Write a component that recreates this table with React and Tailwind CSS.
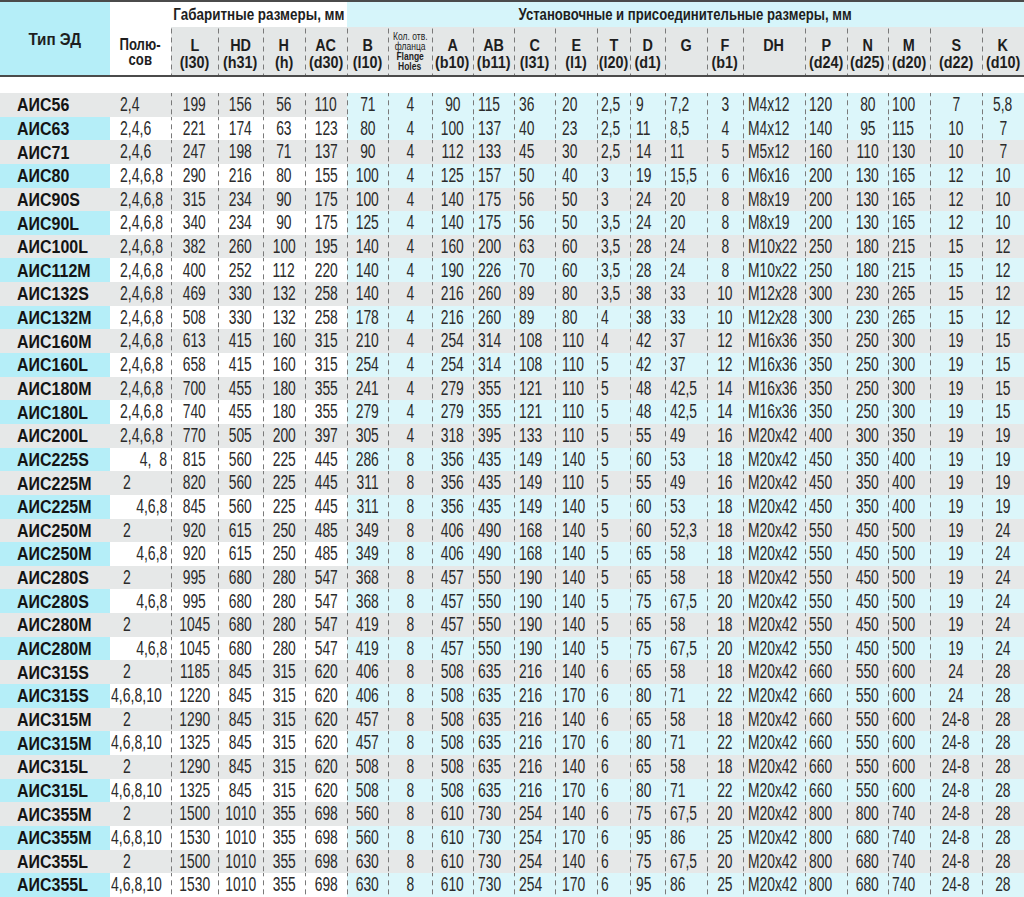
import React from 'react';

// габариты и присоединительные размеры двигателей АИС
const rows = [
  ['АИС56', '2,4', '199', '156', '56', '110', '71', '4', '90', '115', '36', '20', '2,5', '9', '7,2', '3', 'M4x12', '120', '80', '100', '7', '5,8'],
  ['АИС63', '2,4,6', '221', '174', '63', '123', '80', '4', '100', '137', '40', '23', '2,5', '11', '8,5', '4', 'M4x12', '140', '95', '115', '10', '7'],
  ['АИС71', '2,4,6', '247', '198', '71', '137', '90', '4', '112', '133', '45', '30', '2,5', '14', '11', '5', 'M5x12', '160', '110', '130', '10', '7'],
  ['АИС80', '2,4,6,8', '290', '216', '80', '155', '100', '4', '125', '157', '50', '40', '3', '19', '15,5', '6', 'M6x16', '200', '130', '165', '12', '10'],
  ['АИС90S', '2,4,6,8', '315', '234', '90', '175', '100', '4', '140', '175', '56', '50', '3', '24', '20', '8', 'M8x19', '200', '130', '165', '12', '10'],
  ['АИС90L', '2,4,6,8', '340', '234', '90', '175', '125', '4', '140', '175', '56', '50', '3,5', '24', '20', '8', 'M8x19', '200', '130', '165', '12', '10'],
  ['АИС100L', '2,4,6,8', '382', '260', '100', '195', '140', '4', '160', '200', '63', '60', '3,5', '28', '24', '8', 'M10x22', '250', '180', '215', '15', '12'],
  ['АИС112M', '2,4,6,8', '400', '252', '112', '220', '140', '4', '190', '226', '70', '60', '3,5', '28', '24', '8', 'M10x22', '250', '180', '215', '15', '12'],
  ['АИС132S', '2,4,6,8', '469', '330', '132', '258', '140', '4', '216', '260', '89', '80', '3,5', '38', '33', '10', 'M12x28', '300', '230', '265', '15', '12'],
  ['АИС132M', '2,4,6,8', '508', '330', '132', '258', '178', '4', '216', '260', '89', '80', '4', '38', '33', '10', 'M12x28', '300', '230', '265', '15', '12'],
  ['АИС160M', '2,4,6,8', '613', '415', '160', '315', '210', '4', '254', '314', '108', '110', '4', '42', '37', '12', 'M16x36', '350', '250', '300', '19', '15'],
  ['АИС160L', '2,4,6,8', '658', '415', '160', '315', '254', '4', '254', '314', '108', '110', '5', '42', '37', '12', 'M16x36', '350', '250', '300', '19', '15'],
  ['АИС180M', '2,4,6,8', '700', '455', '180', '355', '241', '4', '279', '355', '121', '110', '5', '48', '42,5', '14', 'M16x36', '350', '250', '300', '19', '15'],
  ['АИС180L', '2,4,6,8', '740', '455', '180', '355', '279', '4', '279', '355', '121', '110', '5', '48', '42,5', '14', 'M16x36', '350', '250', '300', '19', '15'],
  ['АИС200L', '2,4,6,8', '770', '505', '200', '397', '305', '4', '318', '395', '133', '110', '5', '55', '49', '16', 'M20x42', '400', '300', '350', '19', '19'],
  ['АИС225S', '4,  8', '815', '560', '225', '445', '286', '8', '356', '435', '149', '140', '5', '60', '53', '18', 'M20x42', '450', '350', '400', '19', '19'],
  ['АИС225M', '2', '820', '560', '225', '445', '311', '8', '356', '435', '149', '110', '5', '55', '49', '16', 'M20x42', '450', '350', '400', '19', '19'],
  ['АИС225M', '4,6,8', '845', '560', '225', '445', '311', '8', '356', '435', '149', '140', '5', '60', '53', '18', 'M20x42', '450', '350', '400', '19', '19'],
  ['АИС250M', '2', '920', '615', '250', '485', '349', '8', '406', '490', '168', '140', '5', '60', '52,3', '18', 'M20x42', '550', '450', '500', '19', '24'],
  ['АИС250M', '4,6,8', '920', '615', '250', '485', '349', '8', '406', '490', '168', '140', '5', '65', '58', '18', 'M20x42', '550', '450', '500', '19', '24'],
  ['АИС280S', '2', '995', '680', '280', '547', '368', '8', '457', '550', '190', '140', '5', '65', '58', '18', 'M20x42', '550', '450', '500', '19', '24'],
  ['АИС280S', '4,6,8', '995', '680', '280', '547', '368', '8', '457', '550', '190', '140', '5', '75', '67,5', '20', 'M20x42', '550', '450', '500', '19', '24'],
  ['АИС280M', '2', '1045', '680', '280', '547', '419', '8', '457', '550', '190', '140', '5', '65', '58', '18', 'M20x42', '550', '450', '500', '19', '24'],
  ['АИС280M', '4,6,8', '1045', '680', '280', '547', '419', '8', '457', '550', '190', '140', '5', '75', '67,5', '20', 'M20x42', '550', '450', '500', '19', '24'],
  ['АИС315S', '2', '1185', '845', '315', '620', '406', '8', '508', '635', '216', '140', '6', '65', '58', '18', 'M20x42', '660', '550', '600', '24', '28'],
  ['АИС315S', '4,6,8,10', '1220', '845', '315', '620', '406', '8', '508', '635', '216', '170', '6', '80', '71', '22', 'M20x42', '660', '550', '600', '24', '28'],
  ['АИС315M', '2', '1290', '845', '315', '620', '457', '8', '508', '635', '216', '140', '6', '65', '58', '18', 'M20x42', '660', '550', '600', '24-8', '28'],
  ['АИС315M', '4,6,8,10', '1325', '845', '315', '620', '457', '8', '508', '635', '216', '170', '6', '80', '71', '22', 'M20x42', '660', '550', '600', '24-8', '28'],
  ['АИС315L', '2', '1290', '845', '315', '620', '508', '8', '508', '635', '216', '140', '6', '65', '58', '18', 'M20x42', '660', '550', '600', '24-8', '28'],
  ['АИС315L', '4,6,8,10', '1325', '845', '315', '620', '508', '8', '508', '635', '216', '170', '6', '80', '71', '22', 'M20x42', '660', '550', '600', '24-8', '28'],
  ['АИС355M', '2', '1500', '1010', '355', '698', '560', '8', '610', '730', '254', '140', '6', '75', '67,5', '20', 'M20x42', '800', '800', '740', '24-8', '28'],
  ['АИС355M', '4,6,8,10', '1530', '1010', '355', '698', '560', '8', '610', '730', '254', '170', '6', '95', '86', '25', 'M20x42', '800', '680', '740', '24-8', '28'],
  ['АИС355L', '2', '1500', '1010', '355', '698', '630', '8', '610', '730', '254', '140', '6', '75', '67,5', '20', 'M20x42', '800', '680', '740', '24-8', '28'],
  ['АИС355L', '4,6,8,10', '1530', '1010', '355', '698', '630', '8', '610', '730', '254', '170', '6', '95', '86', '25', 'M20x42', '800', '680', '740', '24-8', '28'],
];

const heads = [
  ['L', '(l30)'], ['HD', '(h31)'], ['H', '(h)'], ['AC', '(d30)'],
  ['B', '(l10)'], null, ['A', '(b10)'], ['AB', '(b11)'], ['C', '(l31)'], ['E', '(l1)'],
  ['T', '(l20)'], ['D', '(d1)'], ['G', ''], ['F', '(b1)'], ['DH', ''],
  ['P', '(d24)'], ['N', '(d25)'], ['M', '(d20)'], ['S', '(d22)'], ['K', '(d10)'],
];

// выравнивание значений по колонкам L..K: [ячейка, точка сжатия]
const C = ['justify-center', 'origin-center'];
const align = [
  C, C, C, C,
  C, C, C, ['justify-start pl-[5px]', 'origin-left'],
  ['justify-start pl-[5px]', 'origin-left'], ['justify-start pl-[7px]', 'origin-left'], ['justify-start pl-[4px]', 'origin-left'], ['justify-start pl-[6px]', 'origin-left'],
  ['justify-start pl-[5px]', 'origin-left'], C, ['justify-start pl-[5px]', 'origin-left'], ['justify-start pl-[4px]', 'origin-left'],
  C, ['justify-start pl-[4px]', 'origin-left'], C, C,
];

const GRID = 'grid grid-cols-[110px_61px_47px_45px_42px_42px_41px_44px_41px_41px_41px_42px_33px_35px_42px_36px_62px_42px_41px_42px_52px_42px]';
const DASH = 'bg-[linear-gradient(to_bottom,#7a7a7a_5px,transparent_5px)] bg-[length:1px_9px] bg-repeat-y bg-left';

const polAlign = (p) => {
  if (p === '2') return ['justify-start pl-[13px]', 'origin-left'];
  if (p === '4,6,8' || p === '4,  8') return ['justify-end pr-[4px]', 'origin-right'];
  if (p === '4,6,8,10') return ['justify-start pl-[1px]', 'origin-left'];
  return ['justify-start pl-[10px]', 'origin-left'];
};

const Row = ({ r, i }) => {
  const odd = i % 2 === 1;
  const typeBg = odd ? 'bg-[#b5eef8]' : 'bg-[#e6e8e8]';
  const leftBg = odd ? 'bg-white' : 'bg-[#e6e8e8]';
  const rightBg = odd || i === 0 ? 'bg-[#dcf6fa]' : 'bg-[#e6e8e8]';
  const pa = polAlign(r[1]);
  return (
    <div className={`${GRID} h-[23.65px]`}>
      <div className={`${typeBg} flex items-center pl-[17px]`}>
        <span className="inline-block whitespace-nowrap origin-left scale-x-[0.84] font-bold text-[19px] text-[#141414]">{r[0]}</span>
      </div>
      <div className={`${leftBg} flex items-center min-w-0 ${pa[0]}`}>
        <span className={`inline-block whitespace-pre scale-x-[0.72] ${pa[1]}`}>{r[1]}</span>
      </div>
      {r.slice(2).map((v, j) => (
        <div key={j} className={`${j < 4 ? leftBg : rightBg} ${DASH} flex items-center min-w-0 ${align[j][0]}`}>
          <span className={`inline-block whitespace-nowrap scale-x-[0.71] ${align[j][1]}`}>{v}</span>
        </div>
      ))}
    </div>
  );
};

export default function App() {
  return (
    <div className="w-[1024px] h-[897px] overflow-hidden bg-white font-['Liberation_Sans',Arial,sans-serif] text-[19.5px] leading-none text-[#2b2b2b]">
      <div className={`${GRID} grid-rows-[25px_48px] border-t-2 border-b-2 border-[#4b4b4b] text-[#1e1e1e] font-bold`}>
        <div className="row-span-2 bg-[#b5eef8] flex items-center justify-center pt-[2px]">
          <span className="inline-block text-[16px] scale-x-[0.95]">Тип ЭД</span>
        </div>
        <div className="row-span-2 bg-white flex flex-col items-center justify-end pb-[8px] text-[16px] leading-[15px] min-w-0">
          <span className="inline-block scale-x-[0.82] whitespace-nowrap">Полю-</span>
          <span className="inline-block scale-x-[0.82] whitespace-nowrap">сов</span>
        </div>
        <div className="col-span-4 bg-white flex items-center justify-center min-w-0">
          <span className="inline-block whitespace-nowrap text-[16px] scale-x-[0.84]">Габаритные размеры, мм</span>
        </div>
        <div className="col-span-16 bg-[#d6f5fa] flex items-center justify-center min-w-0">
          <span className="inline-block whitespace-nowrap text-[16px] scale-x-[0.82]">Установочные и присоединительные размеры, мм</span>
        </div>
        {heads.map((h, j) =>
          h ? (
            <div key={j} className={`bg-[#e4e7e7] ${DASH} flex flex-col items-center justify-start pt-[10px] text-[16px] leading-[17px] min-w-0`}>
              <span className="inline-block whitespace-nowrap scale-x-[0.9]">{h[0]}</span>
              <span className="inline-block whitespace-nowrap scale-x-[0.9]">{h[1]}</span>
            </div>
          ) : (
            <div key={j} className={`bg-[#e4e7e7] ${DASH} flex flex-col items-center justify-center pt-[2px] text-[10px] leading-[10px] min-w-0`}>
              <span className="inline-block whitespace-nowrap scale-x-[0.85] font-normal">Кол. отв.</span>
              <span className="inline-block whitespace-nowrap scale-x-[0.85] font-normal">фланца</span>
              <span className="inline-block whitespace-nowrap scale-x-[0.85]">Flange</span>
              <span className="inline-block whitespace-nowrap scale-x-[0.85]">Holes</span>
            </div>
          )
        )}
      </div>
      <div className="pt-[16px]">
        {rows.map((r, i) => (
          <Row key={i} r={r} i={i} />
        ))}
      </div>
    </div>
  );
}
